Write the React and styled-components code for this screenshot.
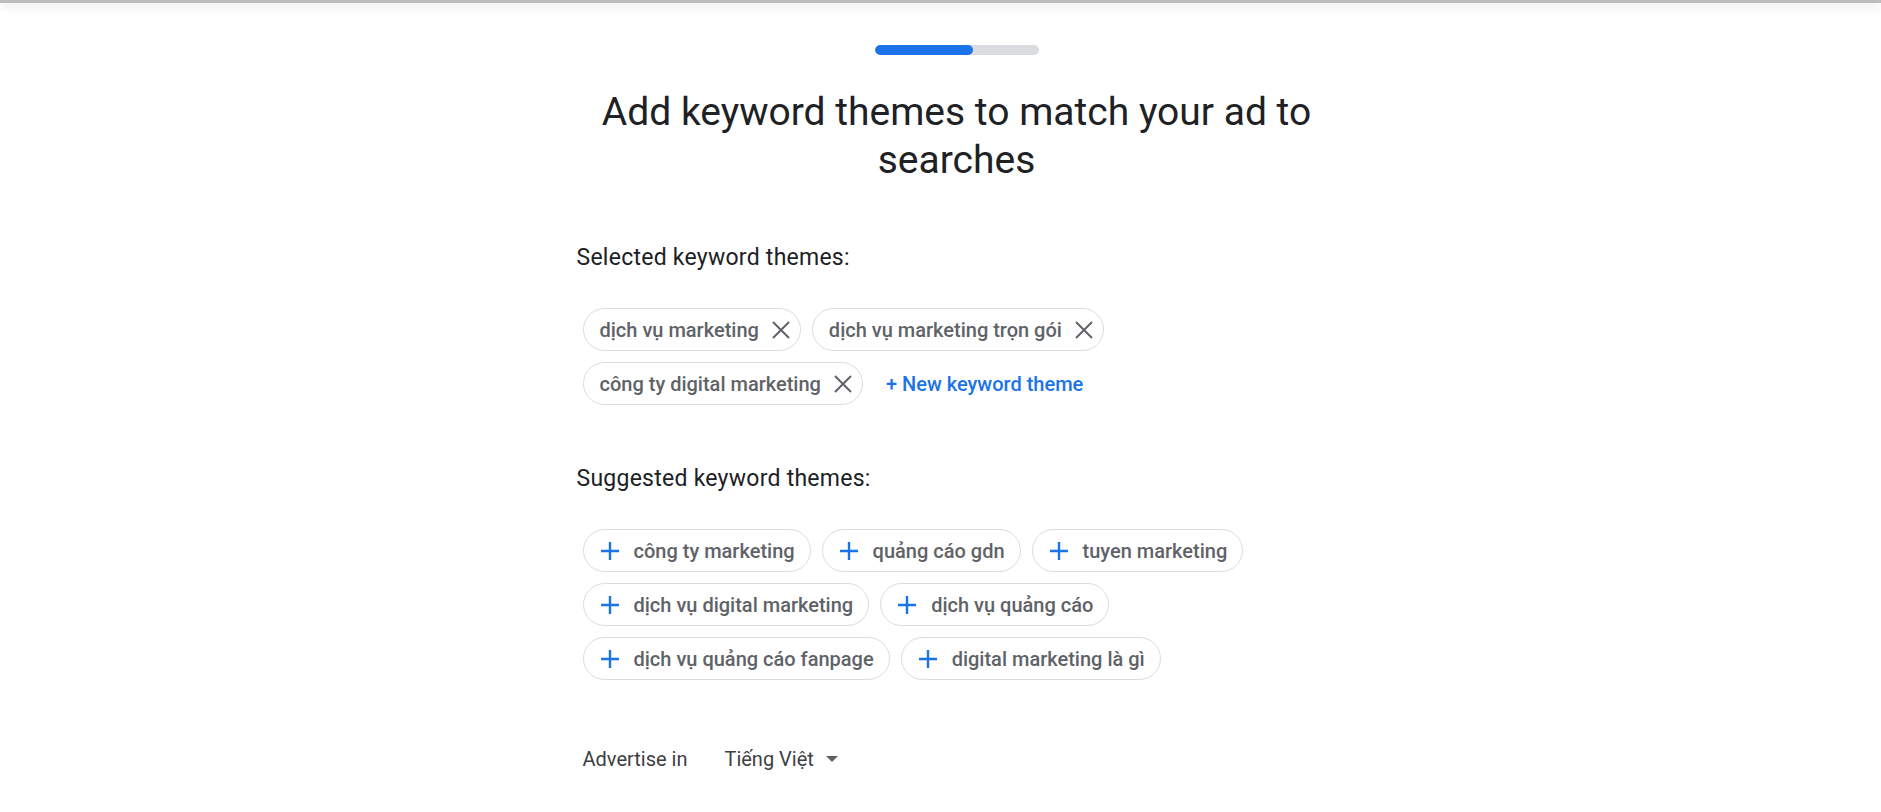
import React from 'react';
import styled, { createGlobalStyle } from 'styled-components';

const selected = ['dịch vụ marketing', 'dịch vụ marketing trọn gói', 'công ty digital marketing'];
const suggested = [
  'công ty marketing',
  'quảng cáo gdn',
  'tuyen marketing',
  'dịch vụ digital marketing',
  'dịch vụ quảng cáo',
  'dịch vụ quảng cáo fanpage',
  'digital marketing là gì',
];

const CloseIcon = () => (
  <svg width="24" height="24" viewBox="0 0 24 24">
    <path d="M4 4 L20 20 M20 4 L4 20" stroke="#5f6368" strokeWidth="2" fill="none" />
  </svg>
);

const PlusIcon = () => (
  <svg width="20" height="20" viewBox="0 0 20 20">
    <path d="M10 1 V19 M1 10 H19" stroke="#1a73e8" strokeWidth="2.4" fill="none" />
  </svg>
);

export default function App() {
  return (
    <>
      <GlobalStyle />
      <TopEdge />
      <Page>
        <Column>
          <Progress>
            <ProgressFill style={{ width: '60%' }} />
          </Progress>
          <Title>Add keyword themes to match your ad to searches</Title>

          <SectionLabel>Selected keyword themes:</SectionLabel>
          <ChipList>
            {selected.map((k) => (
              <Chip key={k} $removable>
                <ChipText>{k}</ChipText>
                <CloseIcon />
              </Chip>
            ))}
            <NewLink>+ New keyword theme</NewLink>
          </ChipList>

          <SectionLabel>Suggested keyword themes:</SectionLabel>
          <ChipList>
            {suggested.map((k) => (
              <Chip key={k}>
                <PlusIcon />
                <ChipText>{k}</ChipText>
              </Chip>
            ))}
          </ChipList>

          <LangRow>
            <span>Advertise in</span>
            <LangSelect>
              Tiếng Việt
              <Caret />
            </LangSelect>
          </LangRow>
        </Column>
      </Page>
    </>
  );
}

const GlobalStyle = createGlobalStyle`
  body {
    margin: 0;
    background: #fff;
    font-family: Roboto, "Noto Sans", Arial, sans-serif;
    color: #202124;
  }
`;

const TopEdge = styled.div`
  height: 3px;
  background: #bdbdbd;
  box-shadow: 0 3px 10px rgba(0, 0, 0, 0.16);
`;

const Page = styled.div`
  padding-left: 32px;
`;

const Column = styled.div`
  width: 760px;
  margin: 0 auto;
  display: flex;
  flex-direction: column;
`;

const Progress = styled.div`
  align-self: center;
  width: 164px;
  height: 10px;
  margin-top: 42px;
  border-radius: 5px;
  background: #dadce0;
  overflow: hidden;
`;

const ProgressFill = styled.div`
  height: 100%;
  border-radius: 5px;
  background: #1a73e8;
`;

const Title = styled.h1`
  margin: 33px auto 0;
  max-width: 760px;
  font-size: 39px;
  line-height: 48px;
  font-weight: 400;
  text-align: center;
  color: #202124;
`;

const SectionLabel = styled.div`
  margin-top: 60px;
  font-size: 23px;
  line-height: 28px;
  letter-spacing: 0.25px;
  color: #202124;
`;

const ChipList = styled.div`
  display: flex;
  flex-wrap: wrap;
  align-items: center;
  gap: 11px;
  margin-top: 36px;
  padding-left: 6px;
`;

const Chip = styled.div`
  display: inline-flex;
  align-items: center;
  box-sizing: border-box;
  height: 43px;
  padding: ${(p) => (p.$removable ? '0 7px 0 16px' : '0 15px 0 16px')};
  gap: ${(p) => (p.$removable ? '10px' : '14px')};
  border: 1px solid #dadce0;
  border-radius: 22px;
  background: #fff;
`;

const ChipText = styled.span`
  font-size: 20px;
  font-weight: 500;
  color: #5f6368;
`;

const NewLink = styled.span`
  margin-left: 12px;
  font-size: 20px;
  font-weight: 500;
  color: #1a73e8;
`;

const LangRow = styled.div`
  display: flex;
  align-items: center;
  gap: 37px;
  margin-top: 67px;
  padding-left: 6px;
  font-size: 20px;
  line-height: 24px;
  color: #3c4043;
`;

const LangSelect = styled.span`
  display: inline-flex;
  align-items: center;
  gap: 12px;
`;

const Caret = styled.span`
  width: 0;
  height: 0;
  border-left: 6.5px solid transparent;
  border-right: 6.5px solid transparent;
  border-top: 6.5px solid #5f6368;
`;
